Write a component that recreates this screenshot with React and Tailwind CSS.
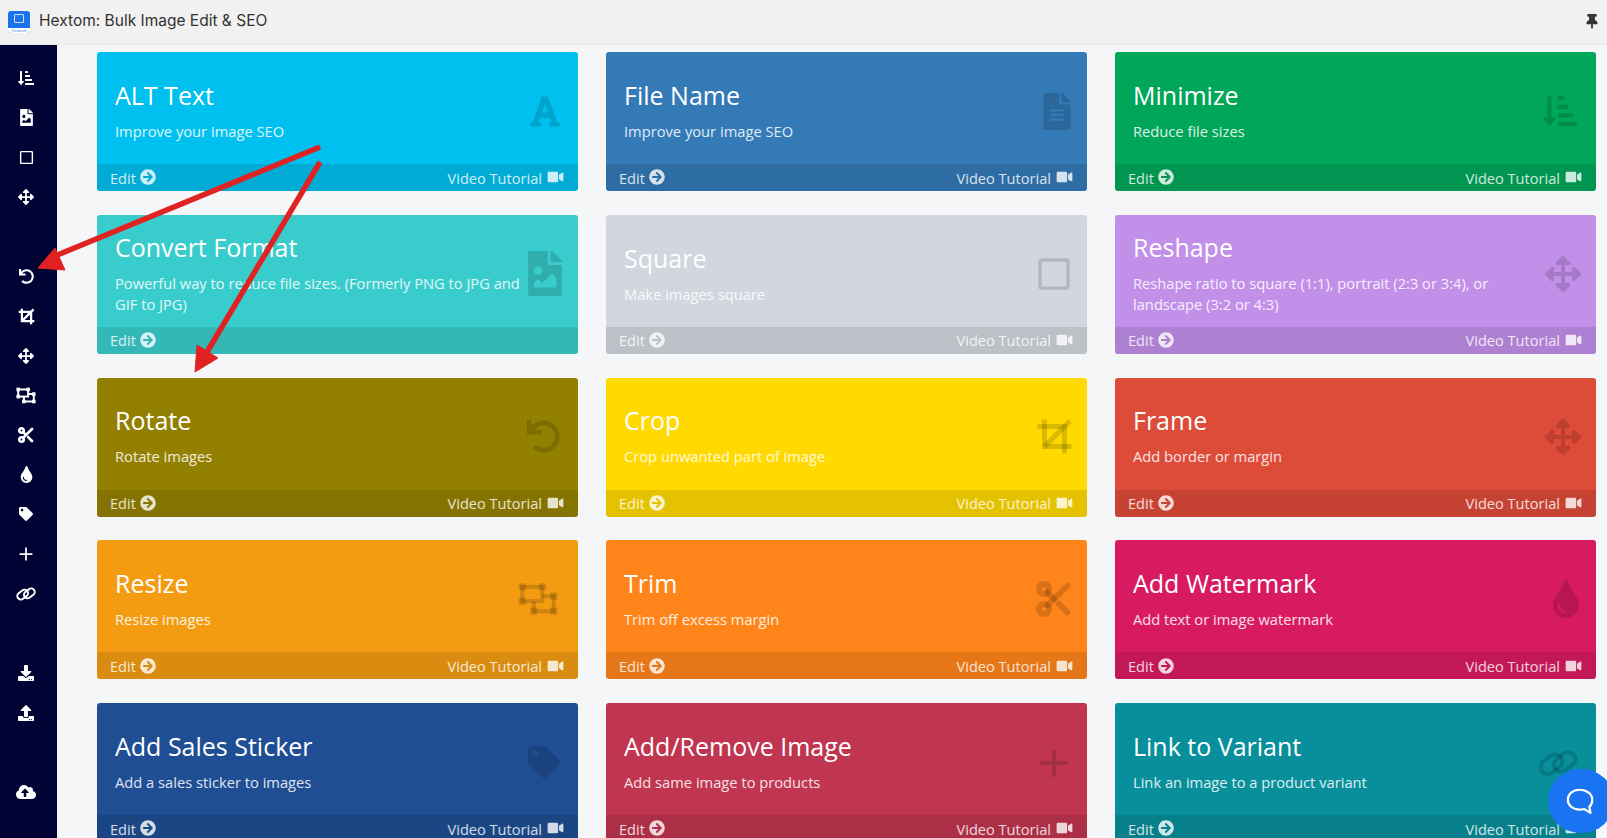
import React from 'react';
import { Scissors } from 'lucide-react';
import {
  FaArrowCircleRight,
  FaArrowsAlt,
  FaCloudUploadAlt,
  FaDownload,
  FaFileAlt,
  FaFileImage,
  FaFont,
  FaRegSquare,
  FaSortAmountDownAlt,
  FaTag,
  FaThumbtack,
  FaTint,
  FaUndo,
  FaUpload,
  FaVideo,
} from 'react-icons/fa';

const ResizeIcon = ({ className }) => (
  <svg viewBox="0 0 28 24" className={className} fill="none" stroke="currentColor" strokeWidth="2.8">
    <rect x="3" y="3.5" width="14" height="10" />
    <path d="M17 10h8v10.5H11v-7" />
    <g fill="currentColor" stroke="none">
      <rect x="0.5" y="1" width="5" height="5" />
      <rect x="14.5" y="1" width="5" height="5" />
      <rect x="0.5" y="11" width="5" height="5" />
      <rect x="8.5" y="18" width="5" height="5" />
      <rect x="22.5" y="7.5" width="5" height="5" />
      <rect x="22.5" y="18" width="5" height="5" />
    </g>
  </svg>
);

const CropIcon = ({ className }) => (
  <svg viewBox="0 0 24 24" className={className} fill="none" stroke="currentColor" strokeWidth="3.2">
    <path d="M5.5 1v17.5H23" />
    <path d="M1 5.5h17.5V23" />
    <path d="M22 2L5.5 18.5" />
  </svg>
);

const TrimIcon = ({ className }) => <Scissors className={className} strokeWidth={3.6} />;

const LinkIcon = ({ className }) => (
  <svg viewBox="0 0 24 24" className={className} fill="none" stroke="currentColor" strokeWidth="2.4">
    <rect x="1" y="8.5" width="14" height="8.5" rx="4.25" transform="rotate(-38 8 12.75)" />
    <rect x="9" y="7" width="14" height="8.5" rx="4.25" transform="rotate(-38 16 11.25)" />
  </svg>
);

const PlusIcon = ({ className }) => (
  <svg viewBox="0 0 24 24" className={className} fill="none" stroke="currentColor" strokeWidth="3">
    <path d="M12 1v22M1 12h22" />
  </svg>
);

const cards = [
  { title: 'ALT Text', text: 'Improve your image SEO', bg: 'bg-[#00c0ef]', Icon: FaFont, size: 'w-[30px] h-[35px]' },
  { title: 'File Name', text: 'Improve your image SEO', bg: 'bg-[#337ab7]', Icon: FaFileAlt, size: 'w-[28px] h-[37px] translate-x-[3px]' },
  { title: 'Minimize', text: 'Reduce file sizes', bg: 'bg-[#00a65a]', Icon: FaSortAmountDownAlt, size: 'w-[40px] h-[34px] -translate-x-[3px]' },
  { title: 'Convert Format', text: 'Powerful way to reduce file sizes. (Formerly PNG to JPG and GIF to JPG)', bg: 'bg-[#39cccc]', Icon: FaFileImage, size: 'w-[34px] h-[45px]', noVideo: true },
  { title: 'Square', text: 'Make images square', bg: 'bg-[#d2d6de]', Icon: FaRegSquare, size: 'w-[36px] h-[36px]' },
  { title: 'Reshape', text: 'Reshape ratio to square (1:1), portrait (2:3 or 3:4), or landscape (3:2 or 4:3)', bg: 'bg-[#c28fe9]', Icon: FaArrowsAlt, size: 'w-[36px] h-[36px]' },
  { title: 'Rotate', text: 'Rotate images', bg: 'bg-[#938000]', Icon: FaUndo, size: 'w-[33px] h-[33px] -translate-x-[2px]' },
  { title: 'Crop', text: 'Crop unwanted part of image', bg: 'bg-[#ffd900]', Icon: CropIcon, size: 'w-[37px] h-[37px]' },
  { title: 'Frame', text: 'Add border or margin', bg: 'bg-[#dd4b39]', Icon: FaArrowsAlt, size: 'w-[36px] h-[36px]' },
  { title: 'Resize', text: 'Resize images', bg: 'bg-[#f39c12]', Icon: ResizeIcon, size: 'w-[45px] h-[38px] -translate-x-[7px]' },
  { title: 'Trim', text: 'Trim off excess margin', bg: 'bg-[#ff851b]', Icon: TrimIcon, size: 'w-[40px] h-[40px]' },
  { title: 'Add Watermark', text: 'Add text or image watermark', bg: 'bg-[#d81b60]', Icon: FaTint, size: 'w-[28px] h-[38px] translate-x-[3px]' },
  { title: 'Add Sales Sticker', text: 'Add a sales sticker to images', bg: 'bg-[#1f4e94]', Icon: FaTag, size: 'w-[32px] h-[32px] -translate-x-[1px]' },
  { title: 'Add/Remove Image', text: 'Add same image to products', bg: 'bg-[#c0354f]', Icon: PlusIcon, size: 'w-[30px] h-[30px] translate-y-[1px]' },
  { title: 'Link to Variant', text: 'Link an image to a product variant', bg: 'bg-[#088f9b]', Icon: LinkIcon, size: 'w-[48px] h-[48px] -translate-x-[5px] translate-y-[1px]' },
];

const sideIcons = [
  { Icon: FaSortAmountDownAlt, size: 'w-[18px] h-[16px]' },
  { Icon: FaFileImage, size: 'w-[13px] h-[17px]' },
  { Icon: FaRegSquare, size: 'w-[15px] h-[15px]' },
  { Icon: FaArrowsAlt, size: 'w-[16px] h-[16px]' },
  null,
  { Icon: FaUndo, size: 'w-[15px] h-[15px]' },
  { Icon: CropIcon, size: 'w-[17px] h-[17px]' },
  { Icon: FaArrowsAlt, size: 'w-[16px] h-[16px]' },
  { Icon: ResizeIcon, size: 'w-[20px] h-[17px]' },
  { Icon: TrimIcon, size: 'w-[18px] h-[18px]' },
  { Icon: FaTint, size: 'w-[13px] h-[17px]' },
  { Icon: FaTag, size: 'w-[14px] h-[14px]' },
  { Icon: PlusIcon, size: 'w-[14px] h-[14px]' },
  { Icon: LinkIcon, size: 'w-[20px] h-[20px]' },
  null,
  { Icon: FaDownload, size: 'w-[16px] h-[16px]' },
  { Icon: FaUpload, size: 'w-[16px] h-[16px]' },
  null,
  { Icon: FaCloudUploadAlt, size: 'w-[20px] h-[16px]' },
];

const Card = ({ title, text, bg, Icon, size, noVideo }) => (
  <div className={`h-[139px] rounded-[3px] overflow-hidden flex flex-col text-white ${bg}`}>
    <div className="flex-1 flex items-center justify-between pl-[18px] pr-[13px] pt-[6px]">
      <div className="w-[410px]">
        <h3 className="text-[25px] leading-[30px] mb-[11px]">{title}</h3>
        <p className="text-[14.7px] leading-[21.5px] text-white/85">{text}</p>
      </div>
      <div className="w-[40px] flex justify-center text-black/15 shrink-0">
        <Icon className={size} />
      </div>
    </div>
    <div className="h-[27px] bg-black/10 flex items-center justify-between pl-[13px] pr-[13px] pt-[2px] text-[14.6px] text-white/80">
      <span className="flex items-center gap-[4px]">
        Edit <FaArrowCircleRight className="w-[16px] h-[16px] -mt-[2px]" />
      </span>
      {!noVideo && (
        <span className="flex items-center gap-[4px]">
          Video Tutorial <FaVideo className="w-[19px] h-[14px] -mt-[2px]" />
        </span>
      )}
    </div>
  </div>
);

const Arrows = () => (
  <svg className="absolute inset-0 w-full h-full pointer-events-none" viewBox="0 0 1607 838">
    <g fill="#e02222" stroke="#e02222">
      <path d="M320 147L50 258" strokeWidth="5.5" fill="none" />
      <path d="M38 268L55 248L65 270Z" strokeWidth="1" />
      <path d="M320 162L207 352" strokeWidth="5.5" fill="none" />
      <path d="M195 372L197 345L218 358Z" strokeWidth="1" />
    </g>
  </svg>
);

export default function App() {
  return (
    <div className="relative h-screen overflow-hidden flex flex-col bg-[#f4f6f8] font-['Open_Sans',sans-serif]">
      <header className="h-[45px] shrink-0 bg-[#f1f1f1] border-b border-[#e6e6e6] flex items-center pl-[8px] pr-[9px]">
        <div className="w-[22px] h-[22px] rounded-[3px] bg-[#1a73e8] flex flex-col items-center mr-[9px] relative overflow-hidden">
          <div className="w-[10px] h-[9px] border border-white/80 rounded-[1px] mt-[3px]" />
          <div className="absolute bottom-0 inset-x-0 h-[5px] bg-white text-[4px] leading-[5px] text-center text-[#1a73e8]">Hextom</div>
        </div>
        <span className="font-['Inter',sans-serif] text-[15.5px] text-[#333333] -mt-[2px]">Hextom: Bulk Image Edit &amp; SEO</span>
        <FaThumbtack className="ml-auto w-[12px] h-[15px] text-[#333333] -mt-[2px]" />
      </header>
      <div className="flex-1 flex min-h-0">
        <aside className="w-[57px] shrink-0 bg-[#000333] pt-[13.5px] pr-[5px] text-white">
          {sideIcons.map((item, i) => (
            <div key={i} className="h-[39.65px] flex items-center justify-center">
              {item && <item.Icon className={item.size} />}
            </div>
          ))}
        </aside>
        <main className="flex-1 pl-[40px] pr-[11px] pt-[7px]">
          <div className="grid grid-cols-3 gap-x-[28px] gap-y-[23.75px]">
            {cards.map((c) => (
              <Card key={c.title} {...c} />
            ))}
          </div>
        </main>
      </div>
      <Arrows />
      <button className="absolute left-[1548px] top-[769px] w-[66px] h-[64px] rounded-full bg-[#1a73f0] flex items-center justify-start pl-[18px] text-white">
        <svg viewBox="0 0 32 32" className="w-[29px] h-[29px]" fill="none" stroke="currentColor" strokeWidth="2.4" strokeLinejoin="round">
          <path d="M15 3C7.5 3 2 7.8 2 14s5.5 11 13 11c1.8 0 3.5-.2 5-.7l7 4.2-1.2-6.5C28.4 19.8 29 17 29 14 29 7.8 23 3 15 3Z" />
        </svg>
      </button>
    </div>
  );
}
